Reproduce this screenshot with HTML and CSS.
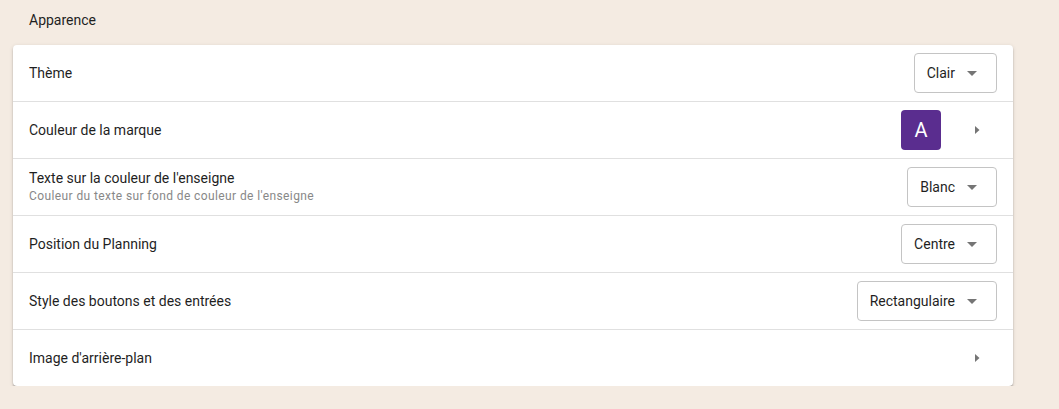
FILE: index.html
```html
<!DOCTYPE html>
<html lang="fr">
<head>
<meta charset="utf-8">
<title>Apparence</title>
<link rel="stylesheet" href="styles.css">
</head>
<body>
<div class="page">
  <h2 class="section-title">Apparence</h2>
  <div class="card">
    <div class="row">
      <div class="label"><div class="title">Thème</div></div>
      <div class="select"><span>Clair</span><svg class="drop" width="24" height="24" viewBox="0 0 24 24"><path d="M7 10l5 5 5-5z"/></svg></div>
    </div>
    <div class="row">
      <div class="label"><div class="title">Couleur de la marque</div></div>
      <div class="brand">
        <div class="swatch">A</div>
        <svg class="chev" width="24" height="24" viewBox="0 0 24 24"><path d="M10 16l4.5-4-4.5-4z"/></svg>
      </div>
    </div>
    <div class="row">
      <div class="label"><div class="title">Texte sur la couleur de l'enseigne</div><div class="sub">Couleur du texte sur fond de couleur de l'enseigne</div></div>
      <div class="select"><span>Blanc</span><svg class="drop" width="24" height="24" viewBox="0 0 24 24"><path d="M7 10l5 5 5-5z"/></svg></div>
    </div>
    <div class="row">
      <div class="label"><div class="title">Position du Planning</div></div>
      <div class="select"><span>Centre</span><svg class="drop" width="24" height="24" viewBox="0 0 24 24"><path d="M7 10l5 5 5-5z"/></svg></div>
    </div>
    <div class="row">
      <div class="label"><div class="title">Style des boutons et des entrées</div></div>
      <div class="select"><span>Rectangulaire</span><svg class="drop" width="24" height="24" viewBox="0 0 24 24"><path d="M7 10l5 5 5-5z"/></svg></div>
    </div>
    <div class="row last">
      <div class="label"><div class="title">Image d'arrière-plan</div></div>
      <div class="brand">
        <svg class="chev" width="24" height="24" viewBox="0 0 24 24"><path d="M10 16l4.5-4-4.5-4z"/></svg>
      </div>
    </div>
  </div>
</div>
</body>
</html>
```
FILE: styles.css
```css
html, body {
  margin: 0;
  padding: 0;
  background: #f4ebe2;
  font-family: Roboto, "Liberation Sans", Arial, sans-serif;
  color: #1f1f1f;
}
.page {
  padding: 0 46px 0 13px;
}
.section-title {
  margin: 0;
  font-size: 14px;
  font-weight: 400;
  line-height: 20px;
  padding: 10px 16px 15px;
  color: #1f1f1f;
}
.card {
  background: #fff;
  border-radius: 4px;
  box-shadow: 0 2px 2px -1px rgba(0,0,0,.3), 0 2px 2px 0 rgba(0,0,0,.14), 0 1px 4px 0 rgba(0,0,0,.12);
  width: 1000px;
}
.row {
  display: flex;
  align-items: center;
  justify-content: space-between;
  height: 56px;
  padding: 0 16px;
  border-bottom: 1px solid #e0e0e0;
}
.row.last {
  border-bottom: none;
  height: 56px;
}
.title {
  font-size: 14px;
  line-height: 18px;
}
.sub {
  font-size: 12px;
  line-height: 18px;
  color: #888888;
  letter-spacing: 0.4px;
}
.select {
  display: flex;
  align-items: center;
  height: 38px;
  border: 1px solid #c4c4c4;
  border-radius: 4px;
  padding: 0 12px;
  font-size: 14px;
}
.select span {
  margin-right: 5px;
}
.drop, .chev {
  display: block;
  fill: #757575;
}
.brand {
  display: flex;
  align-items: center;
}
.swatch {
  width: 40px;
  height: 40px;
  border-radius: 4px;
  background: #5a2d8f;
  color: #fff;
  font-size: 20px;
  display: flex;
  align-items: center;
  justify-content: center;
  margin-right: 24px;
}
.chev {
  margin-right: 8px;
}
```
